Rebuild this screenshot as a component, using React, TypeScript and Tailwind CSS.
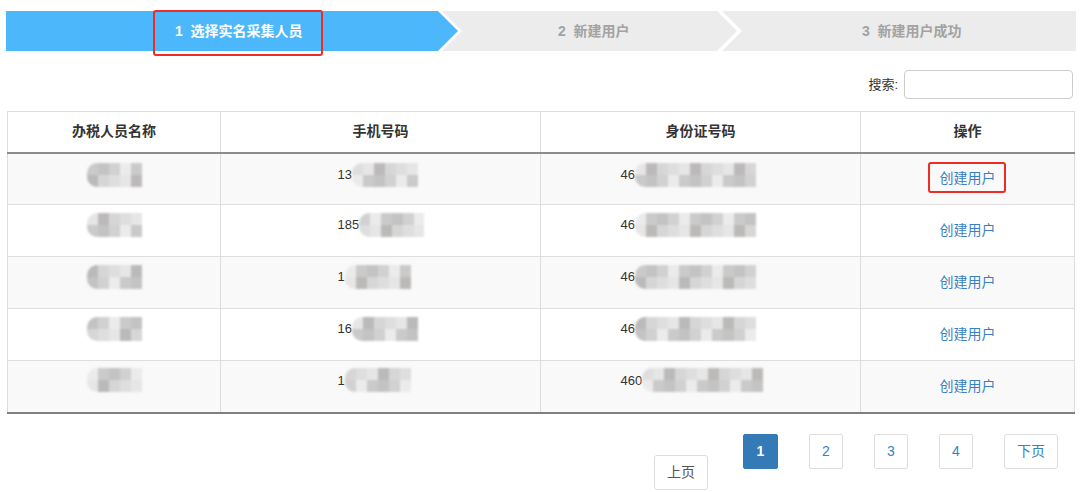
import React from 'react';

const shades = [
  'bg-[#d6d6d6]',
  'bg-[#cacaca]',
  'bg-[#dedede]',
  'bg-[#c3c3c3]',
  'bg-[#e6e6e6]',
  'bg-[#d1d1d1]',
  'bg-[#bcbab9]',
  'bg-[#ebebeb]',
];

const people = [
  { phone: '13', id: '46', seed: 0 },
  { phone: '185', id: '46', seed: 3 },
  { phone: '1', id: '46', seed: 5 },
  { phone: '16', id: '46', seed: 2 },
  { phone: '1', id: '460', seed: 6 },
];

function Mosaic({ cols, seed }: { cols: number; seed: number }) {
  const blocks = Array.from({ length: cols * 2 }, (_, i) => i);
  return (
    <div className="grid grid-flow-col grid-rows-2 overflow-hidden rounded-l-[10px] blur-[0.8px]">
      {blocks.map((i) => (
        <div key={i} className={`h-[12px] w-[11px] ${shades[(i * 5 + seed) % shades.length]}`} />
      ))}
    </div>
  );
}

function Steps() {
  return (
    <div className="relative mx-[6px] mt-[11px] flex h-[40px] w-[1070px] text-[14px]">
      <div className="flex w-[452px] shrink-0 items-center bg-[#4cb8fb] pl-[169px] font-bold text-white [clip-path:polygon(0_0,calc(100%-20px)_0,100%_50%,calc(100%-20px)_100%,0_100%)]">
        1&nbsp;&nbsp;选择实名采集人员
      </div>
      <div className="-ml-[16px] flex w-[295px] shrink-0 items-center bg-[#ececec] pl-[116px] font-bold text-[#a2a2a2] [clip-path:polygon(0_0,calc(100%-20px)_0,100%_50%,calc(100%-20px)_100%,0_100%,20px_50%)]">
        2&nbsp;&nbsp;新建用户
      </div>
      <div className="-ml-[15px] flex w-[354px] shrink-0 items-center bg-[#ececec] pl-[140px] font-bold text-[#a2a2a2] [clip-path:polygon(0_0,100%_0,100%_100%,0_100%,20px_50%)]">
        3&nbsp;&nbsp;新建用户成功
      </div>
      <div className="absolute left-[147px] top-[-1px] h-[46px] w-[170px] rounded-[3px] border-2 border-[#ee2b24]" />
    </div>
  );
}

export default function App() {
  return (
    <div className="h-[492px] w-[1080px] overflow-hidden bg-white font-['Liberation_Sans','Noto_Sans_CJK_SC',sans-serif] text-[#333]">
      <Steps />

      <div className="mt-[19px] flex items-center justify-end pr-[7px]">
        <span className="mr-[6px] text-[13px] text-[#333]">搜索:</span>
        <input className="h-[29px] w-[169px] rounded-[4px] border border-[#cccccc] bg-white outline-none" />
      </div>

      <table className="mt-[12px] ml-[7px] w-[1068px] table-fixed border-collapse border border-[#dddddd]">
        <thead>
          <tr className="h-[41px] border-b-2 border-[#8c8c8c] text-[14px] font-bold">
            <th className="w-[213px] border-r border-[#dddddd]">办税人员名称</th>
            <th className="w-[320px] border-r border-[#dddddd]">手机号码</th>
            <th className="w-[320px] border-r border-[#dddddd]">身份证号码</th>
            <th className="border-r border-[#dddddd]">操作</th>
          </tr>
        </thead>
        <tbody>
          {people.map((p, r) => (
            <tr
              key={r}
              className={`h-[52px] border-b border-[#dddddd] last:border-b-2 last:border-b-[#808080] ${
                r % 2 === 0 ? 'bg-[#f9f9f9]' : 'bg-white'
              }`}
            >
              <td className={`border-r border-[#dddddd] ${r === 0 ? 'pb-2' : 'pb-3'}`}>
                <div className="flex justify-center">
                  <Mosaic cols={5} seed={p.seed + 1} />
                </div>
              </td>
              <td className={`border-r border-[#dddddd] text-[13px] ${r === 0 ? 'pb-2' : 'pb-3'}`}>
                <div className="mx-auto flex w-[86px] items-center">
                  <span>{p.phone}</span>
                  <Mosaic cols={6} seed={p.seed + 2} />
                </div>
              </td>
              <td className={`border-r border-[#dddddd] text-[13px] ${r === 0 ? 'pb-2' : 'pb-3'}`}>
                <div className="mx-auto flex w-[160px] items-center">
                  <span>{p.id}</span>
                  <Mosaic cols={11} seed={p.seed + 4} />
                </div>
              </td>
              <td className="border-r border-[#dddddd] text-center text-[14px]">
                <span className="relative text-[#3a7fc1]">
                  创建用户
                  {r === 0 && (
                    <span className="absolute -left-[12px] -right-[10px] -top-[8px] -bottom-[7px] rounded-[3px] border-2 border-[#ee2b24]" />
                  )}
                </span>
              </td>
            </tr>
          ))}
        </tbody>
      </table>

      <div className="mt-[20px] flex items-start justify-end gap-[31px] pr-[22px] text-[14px]">
        <button className="mr-[4px] mt-[21px] h-[35px] w-[54px] rounded-[3px] border border-[#dddddd] text-[#555]">
          上页
        </button>
        <button className="h-[35px] w-[35px] rounded-[2px] border border-[#337ab7] bg-[#337ab7] font-bold text-white">
          1
        </button>
        {['2', '3', '4'].map((n) => (
          <button key={n} className="h-[35px] w-[34px] rounded-[2px] border border-[#dddddd] text-[#3a7fc1]">
            {n}
          </button>
        ))}
        <button className="h-[35px] w-[54px] rounded-[3px] border border-[#dddddd] text-[#3a7fc1]">下页</button>
      </div>
    </div>
  );
}
